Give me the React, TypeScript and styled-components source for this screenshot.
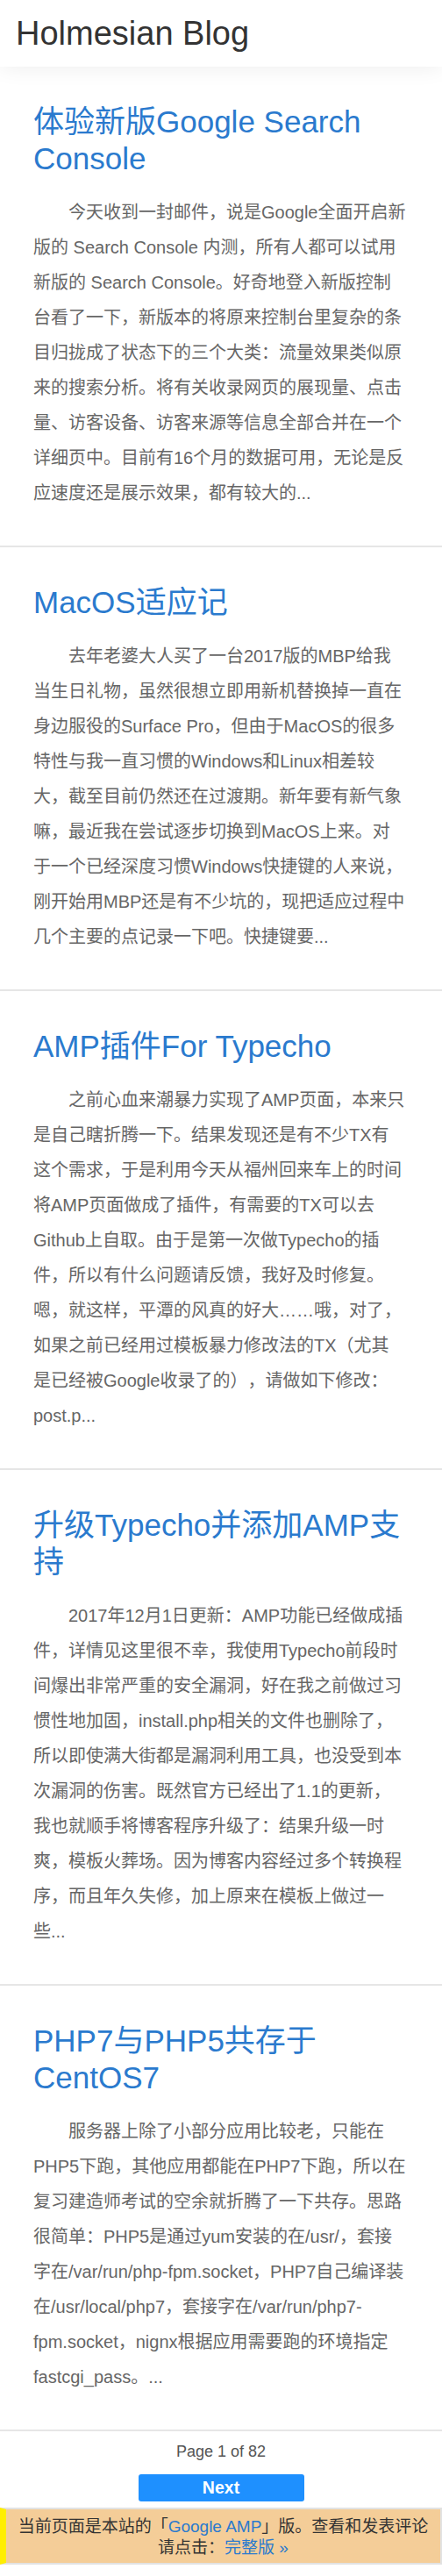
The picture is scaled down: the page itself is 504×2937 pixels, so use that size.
import React from "react";
import styled, { createGlobalStyle } from "styled-components";

const GlobalStyle = createGlobalStyle`
  html, body {
    margin: 0;
    padding: 0;
    background: #ffffff;
  }
  body {
    font-family: "Liberation Sans", "Noto Sans CJK SC", sans-serif;
    text-spacing-trim: space-all;
    text-autospace: no-autospace;
  }
  a { text-decoration: none; }
`;

const Header = styled.header`
  position: relative;
  z-index: 1;
  height: 76px;
  padding-left: 18px;
  background: #ffffff;
  box-shadow: 0 0 26px rgba(0, 0, 0, 0.08);
  font-size: 38px;
  line-height: 76px;
  color: #333333;
`;

const Main = styled.main`
  display: flex;
  flex-direction: column;
`;

const Article = styled.article`
  padding: 42px 41px 40px 38px;
  border-bottom: 2px solid #e6e6e6;
`;

const Title = styled.h2`
  margin: 0 0 20px;
  font-size: 35px;
  line-height: 42px;
  font-weight: normal;
  a {
    color: #2a7ace;
  }
`;

const Excerpt = styled.p`
  margin: 0;
  font-size: 20px;
  line-height: 40px;
  color: #666666;
  text-indent: 2em;
`;

const Pager = styled.nav`
  display: flex;
  flex-direction: column;
  align-items: center;
  padding-top: 12px;
`;

const PageInfo = styled.div`
  font-size: 18px;
  line-height: 22px;
  color: #555555;
`;

const NextButton = styled.a`
  display: block;
  width: 189px;
  height: 31px;
  margin-top: 15px;
  background: #1e90ff;
  border-radius: 3px;
  color: #ffffff;
  font-weight: bold;
  font-size: 19.5px;
  line-height: 31px;
  text-align: center;
`;

const Notice = styled.div`
  margin: 7px 0 12px;
  border: 2px solid #e2e2e2;
  border-left: 7px solid #ffee00;
  background: #f4cd98;
  padding: 8px 10px 5px;
  text-align: center;
  font-size: 19px;
  line-height: 24px;
  color: #333333;
  a {
    color: #2a7ace;
  }
`;

type Post = { title: string; excerpt: string };

const posts: Post[] = [
  {
    title: "体验新版Google Search Console",
    excerpt:
      "今天收到一封邮件，说是Google全面开启新版的 Search Console 内测，所有人都可以试用新版的 Search Console。好奇地登入新版控制台看了一下，新版本的将原来控制台里复杂的条目归拢成了状态下的三个大类：流量效果类似原来的搜索分析。将有关收录网页的展现量、点击量、访客设备、访客来源等信息全部合并在一个详细页中。目前有16个月的数据可用，无论是反应速度还是展示效果，都有较大的...",
  },
  {
    title: "MacOS适应记",
    excerpt:
      "去年老婆大人买了一台2017版的MBP给我当生日礼物，虽然很想立即用新机替换掉一直在身边服役的Surface Pro，但由于MacOS的很多特性与我一直习惯的Windows和Linux相差较大，截至目前仍然还在过渡期。新年要有新气象嘛，最近我在尝试逐步切换到MacOS上来。对于一个已经深度习惯Windows快捷键的人来说，刚开始用MBP还是有不少坑的，现把适应过程中几个主要的点记录一下吧。快捷键要...",
  },
  {
    title: "AMP插件For Typecho",
    excerpt:
      "之前心血来潮暴力实现了AMP页面，本来只是自己瞎折腾一下。结果发现还是有不少TX有这个需求，于是利用今天从福州回来车上的时间将AMP页面做成了插件，有需要的TX可以去Github上自取。由于是第一次做Typecho的插件，所以有什么问题请反馈，我好及时修复。嗯，就这样，平潭的风真的好大……哦，对了，如果之前已经用过模板暴力修改法的TX（尤其是已经被Google收录了的），请做如下修改：post.p...",
  },
  {
    title: "升级Typecho并添加AMP支持",
    excerpt:
      "2017年12月1日更新：AMP功能已经做成插件，详情见这里很不幸，我使用Typecho前段时间爆出非常严重的安全漏洞，好在我之前做过习惯性地加固，install.php相关的文件也删除了，所以即使满大街都是漏洞利用工具，也没受到本次漏洞的伤害。既然官方已经出了1.1的更新，我也就顺手将博客程序升级了：结果升级一时爽，模板火葬场。因为博客内容经过多个转换程序，而且年久失修，加上原来在模板上做过一些...",
  },
  {
    title: "PHP7与PHP5共存于CentOS7",
    excerpt:
      "服务器上除了小部分应用比较老，只能在PHP5下跑，其他应用都能在PHP7下跑，所以在复习建造师考试的空余就折腾了一下共存。思路很简单：PHP5是通过yum安装的在/usr/，套接字在/var/run/php-fpm.socket，PHP7自己编译装在/usr/local/php7，套接字在/var/run/php7-fpm.socket，nignx根据应用需要跑的环境指定fastcgi_pass。...",
  },
];

export default function App() {
  return (
    <>
      <GlobalStyle />
      <Header>Holmesian Blog</Header>
      <Main>
        {posts.map((p) => (
          <Article key={p.title}>
            <Title>
              <a href="#">{p.title}</a>
            </Title>
            <Excerpt>{p.excerpt}</Excerpt>
          </Article>
        ))}
      </Main>
      <Pager>
        <PageInfo>Page 1 of 82</PageInfo>
        <NextButton href="#">Next</NextButton>
      </Pager>
      <Notice>
        当前页面是本站的「<a href="#">Google AMP</a>」版。查看和发表评论请点击：
        <a href="#">完整版 »</a>
      </Notice>
    </>
  );
}
